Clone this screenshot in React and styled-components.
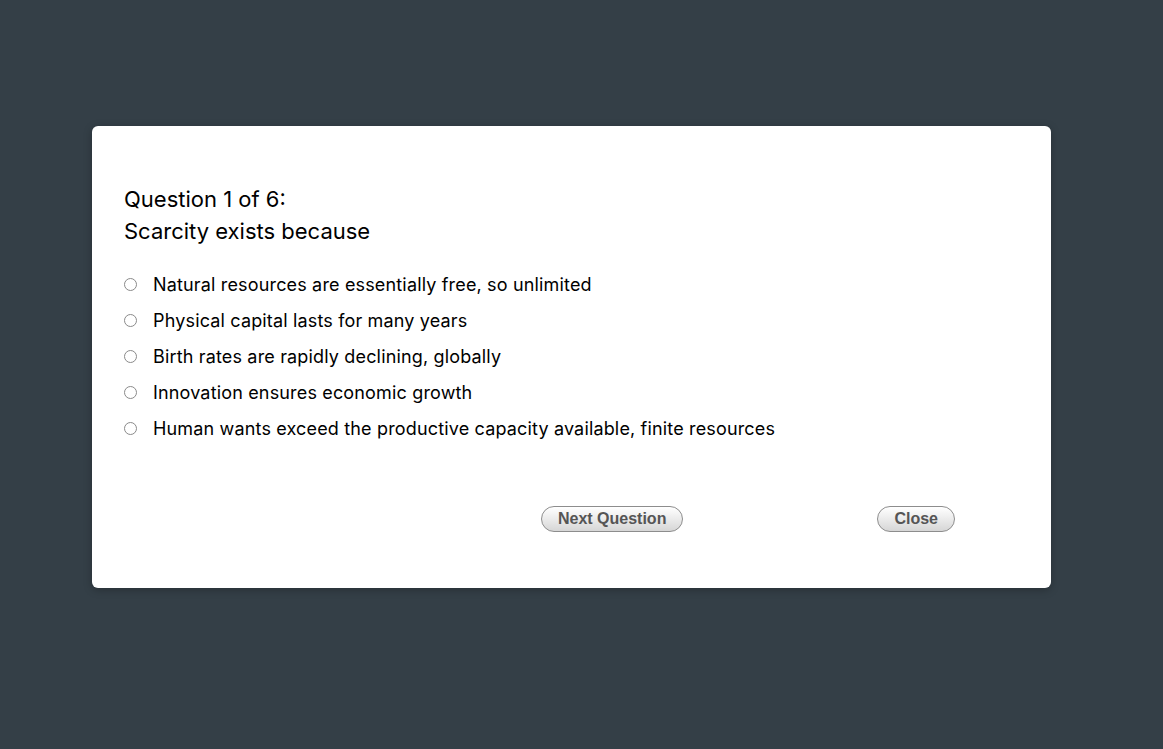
import styled, { createGlobalStyle } from "styled-components"

const GlobalStyle = createGlobalStyle`
html, body {
    margin: 0;
    padding: 0;
    background: #343f47;
    font-family: Inter, "Liberation Sans", Arial, sans-serif;
}
`

const options = [
    "Natural resources are essentially free, so unlimited",
    "Physical capital lasts for many years",
    "Birth rates are rapidly declining, globally",
    "Innovation ensures economic growth",
    "Human wants exceed the productive capacity available, finite resources",
]

const App = () => {
    return (
        <Page>
            <GlobalStyle />
            <Card>
                <Title>
                    Question 1 of 6:
                    <br />
                    Scarcity exists because
                </Title>
                <Options>
                    {options.map((text, i) => (
                        <Option key={i}>
                            <Radio type="radio" name="answer" />
                            <span>{text}</span>
                        </Option>
                    ))}
                </Options>
                <Footer>
                    <PillButton>Next Question</PillButton>
                    <PillButton>Close</PillButton>
                </Footer>
            </Card>
        </Page>
    )
}

const Page = styled.div`
min-height: 749px;
padding: 126px 0 0 92px;
box-sizing: border-box;
`

const Card = styled.div`
width: 959px;
height: 462px;
box-sizing: border-box;
background: #fff;
border-radius: 6px;
box-shadow: 0 2px 8px rgba(0, 0, 0, 0.25);
padding: 57px 32px 0;
`

const Title = styled.h2`
margin: 0;
font-size: 22px;
font-weight: 400;
line-height: 32px;
color: #000;
`

const Options = styled.div`
margin-top: 19px;
display: flex;
flex-direction: column;
`

const Option = styled.label`
display: flex;
align-items: center;
height: 36px;
font-size: 18px;
letter-spacing: 0.16px;
color: #000;
`

const Radio = styled.input`
appearance: none;
margin: 0 16px 0 0;
width: 13px;
height: 13px;
border: 1px solid #8a8a8a;
border-radius: 50%;
background: #fff;
box-sizing: border-box;
`

const Footer = styled.div`
margin-top: 60px;
display: flex;
justify-content: flex-end;
gap: 194px;
padding-right: 64px;
`

const PillButton = styled.button`
height: 26px;
padding: 0 16px;
border: 1px solid #8d8d8d;
border-radius: 13px;
background: linear-gradient(#ffffff, #e9e9e9 55%, #d6d6d6);
color: #555;
font-family: "Liberation Sans", Arial, sans-serif;
font-size: 16px;
font-weight: 700;
line-height: 24px;
`

export default App
